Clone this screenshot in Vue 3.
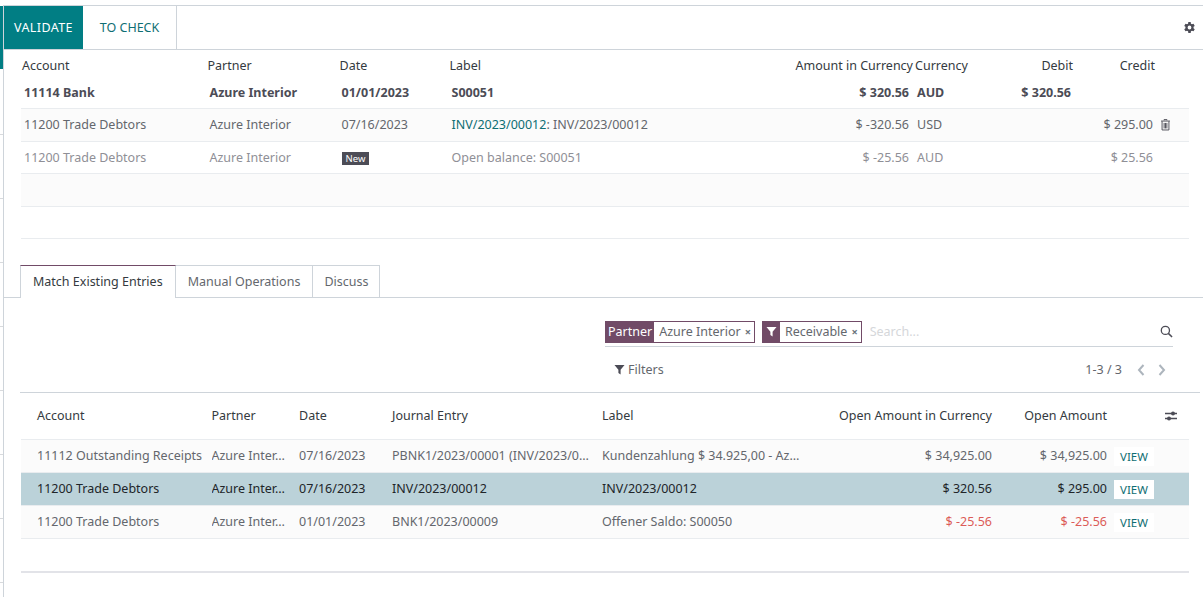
<template>
  <div class="page">
    <!-- left edge of the list behind the form -->
    <div class="behind">
      <div class="behind-active"></div>
      <div v-for="y in behindRows" :key="y" class="behind-tick" :style="{ top: y + 'px' }"></div>
    </div>

    <div class="form">
      <div class="button-bar">
        <button class="btn-validate">VALIDATE</button>
        <button class="btn-check">TO CHECK</button>
        <svg class="gear" viewBox="0 0 24 24"><path d="M19.4 13.2a7.6 7.6 0 0 0 0-2.4l2.3-1.8-2.3-4-2.8 1.1a7.6 7.6 0 0 0-2-1.2L14.2 2H9.8l-.4 2.9a7.6 7.6 0 0 0-2 1.2L4.6 5l-2.3 4 2.3 1.8a7.6 7.6 0 0 0 0 2.4L2.3 15l2.3 4 2.8-1.1a7.6 7.6 0 0 0 2 1.2l.4 2.9h4.4l.4-2.9a7.6 7.6 0 0 0 2-1.2l2.8 1.1 2.3-4zM12 15.5a3.5 3.5 0 1 1 0-7 3.5 3.5 0 0 1 0 7z" fill="#4c4c56" /></svg>
      </div>

      <!-- lignes -->
      <table class="lines">
        <colgroup>
          <col style="width: 185.5px" /><col style="width: 132px" /><col style="width: 110px" /><col style="width: 260px" />
          <col style="width: 204.5px" /><col style="width: 74px" /><col style="width: 86px" /><col style="width: 82px" /><col style="width: 34px" />
        </colgroup>
        <thead>
          <tr>
            <th>Account</th><th>Partner</th><th>Date</th><th>Label</th>
            <th class="num">Amount in Currency</th><th>Currency</th><th class="num">Debit</th><th class="num">Credit</th><th></th>
          </tr>
        </thead>
        <tbody>
          <tr class="auto-balance">
            <td>11114 Bank</td><td>Azure Interior</td><td>01/01/2023</td><td>S00051</td>
            <td class="num">$ 320.56</td><td>AUD</td><td class="num">$ 320.56</td><td class="num"></td><td></td>
          </tr>
          <tr class="shaded tall">
            <td>11200 Trade Debtors</td><td>Azure Interior</td><td>07/16/2023</td>
            <td><a class="link">INV/2023/00012</a>: INV/2023/00012</td>
            <td class="num">$ -320.56</td><td>USD</td><td class="num"></td><td class="num">$ 295.00</td>
            <td class="trash-cell">
              <svg class="trash" viewBox="0 0 12 14"><path d="M4.3 1.6V.7h3.4v.9M.8 2.4h10.4M2 2.6v10.2h8V2.6M4.4 4.6v6.4M6 4.6v6.4M7.6 4.6v6.4" fill="none" stroke="#4c4c56" stroke-width="1.1" /></svg>
            </td>
          </tr>
          <tr class="open-balance">
            <td>11200 Trade Debtors</td><td>Azure Interior</td><td><span class="badge-new">New</span></td><td>Open balance: S00051</td>
            <td class="num">$ -25.56</td><td>AUD</td><td class="num"></td><td class="num">$ 25.56</td><td></td>
          </tr>
          <tr class="shaded tall"><td colspan="9"></td></tr>
          <tr><td colspan="9"></td></tr>
        </tbody>
      </table>

      <div class="tabs">
        <div class="tab active">Match Existing Entries</div>
        <div class="tab">Manual Operations</div>
        <div class="tab last">Discuss</div>
      </div>

      <div class="search-area">
        <div class="search-box">
          <span class="facet">
            <span class="facet-label">Partner</span>
            <span class="facet-value">Azure Interior<span class="facet-x">×</span></span>
          </span>
          <span class="facet">
            <span class="facet-label icon">
              <svg class="funnel" viewBox="0 0 12 12"><path d="M.5 1h11L7.2 6.2V11.4L4.8 9.8V6.2z" fill="#fff" /></svg>
            </span>
            <span class="facet-value">Receivable<span class="facet-x">×</span></span>
          </span>
          <span class="search-placeholder">Search...</span>
          <svg class="magnifier" viewBox="0 0 14 14"><circle cx="5.8" cy="5.8" r="4.4" fill="none" stroke="#4c4c56" stroke-width="1.4" /><path d="M9 9l4 4" stroke="#4c4c56" stroke-width="1.6" /></svg>
        </div>
        <div class="search-tools">
          <span class="filters">
            <svg class="funnel dark" viewBox="0 0 12 12"><path d="M.5 1h11L7.2 6.2V11.4L4.8 9.8V6.2z" fill="#4c4c56" /></svg>Filters
          </span>
          <span class="pager">
            1-3 / 3
            <svg class="chevron prev" viewBox="0 0 10 14"><path d="M7.5 2L3 7l4.5 5" fill="none" stroke="#adb5bd" stroke-width="2" /></svg>
            <svg class="chevron" viewBox="0 0 10 14"><path d="M2.5 2L7 7l-4.5 5" fill="none" stroke="#adb5bd" stroke-width="2" /></svg>
          </span>
        </div>
      </div>
      <div class="divider"></div>

      <!-- résultats -->
      <table class="results">
        <colgroup>
          <col style="width: 190.5px" /><col style="width: 87.5px" /><col style="width: 93px" /><col style="width: 210px" />
          <col style="width: 210px" /><col style="width: 180px" /><col style="width: 115px" /><col style="width: 82px" />
        </colgroup>
        <thead>
          <tr>
            <th class="first">Account</th><th>Partner</th><th>Date</th><th>Journal Entry</th><th>Label</th>
            <th class="num">Open Amount in Currency</th><th class="num">Open Amount</th>
            <th class="opt">
              <svg class="sliders" viewBox="0 0 14 12"><path d="M1 3.5h12M1 8.5h12" stroke="#4c4c56" stroke-width="1.3" /><circle cx="9" cy="3.5" r="2" fill="#4c4c56" /><circle cx="5" cy="8.5" r="2" fill="#4c4c56" /></svg>
            </th>
          </tr>
        </thead>
        <tbody>
          <tr v-for="row in results" :key="row.entry" :class="{ selected: row.selected }">
            <td class="first">{{ row.account }}</td>
            <td>Azure Inter…</td>
            <td>{{ row.date }}</td>
            <td>{{ row.entry }}</td>
            <td>{{ row.label }}</td>
            <td class="num" :class="{ neg: row.neg }">{{ row.open }}</td>
            <td class="num" :class="{ neg: row.neg }">{{ row.amount }}</td>
            <td class="view-cell"><span class="btn-view">VIEW</span></td>
          </tr>
        </tbody>
      </table>
      <div class="table-foot"></div>
    </div>
  </div>
</template>

<script setup>
const behindRows = [134, 198, 262, 326, 390, 454, 518, 582]

const results = [
  {
    account: '11112 Outstanding Receipts',
    date: '07/16/2023',
    entry: 'PBNK1/2023/00001 (INV/2023/0…',
    label: 'Kundenzahlung $ 34.925,00 - Az…',
    open: '$ 34,925.00',
    amount: '$ 34,925.00'
  },
  {
    account: '11200 Trade Debtors',
    date: '07/16/2023',
    entry: 'INV/2023/00012',
    label: 'INV/2023/00012',
    open: '$ 320.56',
    amount: '$ 295.00',
    selected: true
  },
  {
    account: '11200 Trade Debtors',
    date: '01/01/2023',
    entry: 'BNK1/2023/00009',
    label: 'Offener Saldo: S00050',
    open: '$ -25.56',
    amount: '$ -25.56',
    neg: true
  }
]
</script>

<style>
html, body { background: #fff; overflow: hidden; }
</style>

<style scoped>
.page {
  position: relative;
  width: 1203px;
  height: 597px;
  overflow: hidden;
  background: #fff;
  font-family: "Noto Sans", "Open Sans", sans-serif;
  font-size: 12.5px;
  color: #64676d;
  padding-top: 5px;
  box-sizing: border-box;
}

.behind {
  position: absolute;
  left: 0;
  top: 0;
  width: 3px;
  height: 597px;
}
.behind-active {
  position: absolute;
  top: 6px;
  left: 0;
  width: 3px;
  height: 63px;
  background: #017e84;
}
.behind-tick {
  position: absolute;
  left: 0;
  width: 3px;
  height: 1px;
  background: #d8dadd;
}

.form {
  margin-left: 3px;
  height: 592px;
  box-sizing: border-box;
  border-left: 1px solid #ced4da;
  border-top: 1px solid #ced4da;
}

.button-bar {
  display: flex;
  align-items: stretch;
  height: 43px;
  border-bottom: 1px solid #ced4da;
  position: relative;
}
.button-bar button {
  font: inherit;
  border: none;
  cursor: pointer;
  padding: 0;
}
.btn-validate {
  width: 79px;
  background: #017e84;
  color: #fff;
  letter-spacing: 0.4px;
}
.btn-check {
  width: 94px;
  background: #fff;
  color: #0f6e73;
  border-right: 1px solid #ced4da !important;
}
.gear {
  width: 13px;
  height: 13px;
  margin: auto 7px auto auto;
}

table {
  border-collapse: collapse;
  table-layout: fixed;
}
th {
  text-align: left;
  font-weight: 400;
  color: #343a40;
  padding: 0;
  white-space: nowrap;
}
td {
  padding: 0;
  white-space: nowrap;
  overflow: hidden;
}
.num { text-align: right; }

.lines {
  margin-left: 17px;
  width: 1168px;
}
.lines th {
  height: 27px;
  padding: 4px 0 0 1px;
  box-sizing: border-box;
}
.lines td {
  height: 31px;
  padding-left: 3px;
  border-bottom: 1px solid #e9ecef;
}
.lines th.num { padding-left: 0; }
.lines td.num { padding-left: 0; padding-right: 2px; }
.lines td:nth-child(5).num { padding-right: 4px; }
.lines th:nth-child(6) { padding-left: 2px; }
.lines td:nth-child(6) { padding-left: 4px; }
.auto-balance td { font-weight: 700; color: #4c4c56; }
.shaded td { background: #fbfbfb; }
.tall td { padding-bottom: 1px; }
.open-balance td { color: #8f8f96; }
.link { color: #0f6e73; }
.lines .trash-cell { padding-left: 5px; }
.trash {
  width: 11px;
  height: 12px;
  vertical-align: -2px;
}
.badge-new {
  display: inline-block;
  background: #4c4c56;
  color: #fff;
  font-size: 9.5px;
  line-height: 13px;
  padding: 0 4px;
}

.tabs {
  display: flex;
  margin-top: 26px;
  padding-left: 16px;
  border-bottom: 1px solid #ced4da;
  height: 32px;
}
.tab {
  display: flex;
  align-items: center;
  padding: 0 12px;
  border: 1px solid #ced4da;
  border-left: none;
  border-bottom: none;
  background: #fff;
}
.tab.last { padding: 0 11px; }
.tab.active {
  color: #343a40;
  border-left: 1px solid #ced4da;
  border-top-color: #714b67;
  height: 33px;
  padding-bottom: 2px;
  box-sizing: border-box;
  position: relative;
  z-index: 1;
}

.search-area {
  padding: 20px 0 0 601px;
  height: 94px;
  box-sizing: border-box;
}
.search-box {
  display: flex;
  align-items: center;
  height: 29px;
  padding-bottom: 1px;
  border-bottom: 1px solid #ced4da;
  width: 568px;
  box-sizing: border-box;
}
.facet {
  display: inline-flex;
  height: 22px;
  border: 1px solid #714b67;
  box-sizing: border-box;
}
.facet + .facet { margin-left: 7px; }
.facet-label {
  background: #714b67;
  color: #fff;
  display: flex;
  align-items: center;
  padding: 0 2px;
}
.facet-label.icon { width: 13px; justify-content: center; }
.facet-value {
  display: flex;
  align-items: center;
  padding: 0 3px 0 5px;
}
.facet-x {
  margin-left: 4px;
  font-weight: 700;
  font-size: 11px;
  color: #6c757d;
}
.funnel {
  width: 11px;
  height: 11px;
}
.funnel.dark { margin-right: 3px; vertical-align: -1px; }
.search-placeholder {
  color: #d5d7da;
  margin-left: 8px;
}
.magnifier {
  width: 13px;
  height: 13px;
  margin-left: auto;
}
.search-tools {
  display: flex;
  justify-content: space-between;
  align-items: center;
  padding: 0 6px 0 9px;
  width: 568px;
  box-sizing: border-box;
  margin-top: 14px;
}
.pager {
  display: flex;
  align-items: center;
  gap: 11px;
}
.chevron {
  width: 10px;
  height: 14px;
}
.chevron.prev { margin-left: 3px; }

.divider {
  height: 1px;
  margin-left: 16px;
  width: 1180px;
  background: #ced4da;
}

.results {
  width: 1168px;
  margin-left: 17px;
}
.results th {
  height: 44px;
  padding-bottom: 2px;
  border-bottom: 1px solid #e9ecef;
}
.results td {
  height: 30px;
  padding-bottom: 2px;
  border-bottom: 1px solid #e9ecef;
  background: #fbfbfb;
}
.results .first { padding-left: 16px; }
.neg { color: #dc5c58; }
.results .selected td {
  background: #bbd2d9;
  color: #212529;
}
.opt { padding-left: 57px; }
.sliders {
  width: 14px;
  height: 12px;
  vertical-align: -2px;
}
.results .view-cell { padding: 0 0 0 7px; }
.btn-view {
  display: inline-block;
  width: 40px;
  height: 19px;
  line-height: 19px;
  text-align: center;
  background: #fff;
  color: #0f6e73;
  font-size: 11.5px;
}
.table-foot {
  margin: 32px 0 0 17px;
  width: 1168px;
  height: 2px;
  background: #e2e3e8;
}
</style>
